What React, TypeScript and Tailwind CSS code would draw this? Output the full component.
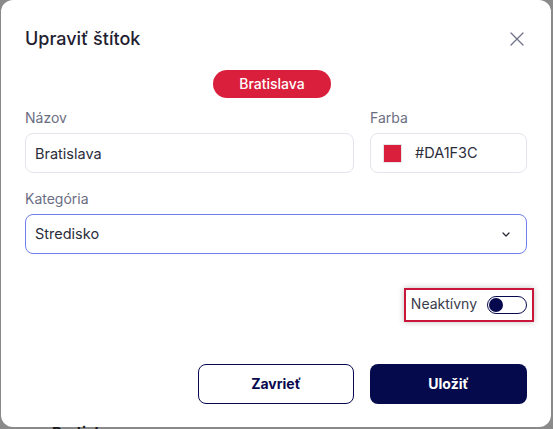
import React, { useState } from "react";

const font = { fontFamily: "Inter, 'Noto Sans', sans-serif" };

const EditTagModal = () => {
  const [name, setName] = useState("Bratislava");
  const [active, setActive] = useState(false);

  return (
    <div className="ml-px w-[550px] h-[427px] rounded-xl bg-white px-6 flex flex-col">
      {/* Header */}
      <div className="flex items-center justify-between pt-[25px]">
        <h2 className="text-[18px] leading-7 font-medium text-[#1f2131]">
          Upraviť štítok
        </h2>
        <button className="mr-[3px] text-[#6f7189]">
          <svg width="14" height="14" viewBox="0 0 14 14" fill="none">
            <path
              d="M1 1L13 13M13 1L1 13"
              stroke="currentColor"
              strokeWidth="1.3"
              strokeLinecap="round"
            />
          </svg>
        </button>
      </div>

      {/* Preview badge */}
      <div className="flex justify-center mt-[17px]">
        <span className="h-7 w-[118px] flex items-center justify-center rounded-full bg-[#DA1F3C] text-white text-sm font-medium -ml-2">
          {name}
        </span>
      </div>

      {/* Name + colour */}
      <div className="flex gap-4 mt-[10px]">
        <div className="flex-1">
          <label className="block text-sm leading-5 text-[#6b6e82] mb-[5px]">
            Názov
          </label>
          <input
            value={name}
            onChange={(e) => setName(e.target.value)}
            className="w-full h-10 rounded-lg border border-[#e4e5ec] px-[9px] text-[14.5px] text-[#2b2d3a] outline-none"
          />
        </div>
        <div className="w-[157px]">
          <label className="block text-sm leading-5 text-[#6b6e82] mb-[5px]">
            Farba
          </label>
          <div className="h-10 rounded-lg border border-[#e4e5ec] flex items-center pl-[12px] gap-[13px]">
            <span className="w-[19px] h-[19px] bg-[#DA1F3C] border border-[#e6e6ea]" />
            <span className="text-[14.5px] text-[#2b2d3a]">#DA1F3C</span>
          </div>
        </div>
      </div>

      {/* Category */}
      <div className="mt-4">
        <label className="block text-sm leading-5 text-[#6b6e82] mb-[5px]">
          Kategória
        </label>
        <div className="h-10 rounded-lg border border-[#6f80ee] flex items-center justify-between pl-[9px] pr-4">
          <span className="text-[14.5px] text-[#2b2d3a]">Stredisko</span>
          <svg width="8" height="5" viewBox="0 0 8 5" fill="none">
            <path
              d="M1 1L4 4L7 1"
              stroke="#2b2d3a"
              strokeWidth="1.3"
              strokeLinecap="round"
              strokeLinejoin="round"
            />
          </svg>
        </div>
      </div>

      {/* Active toggle */}
      <div className="flex justify-end mt-[34px] -mr-[7px]">
        <div className="h-[34px] flex items-center gap-[10px] px-[5px] border-2 border-[#c8173a] shadow-[0_0_6px_rgba(0,0,0,0.25)]">
          <span className="text-sm text-[#3a3c4c] -mt-[3px]">
            {active ? "Aktívny" : "Neaktívny"}
          </span>
          <button
            onClick={() => setActive(!active)}
            className="w-10 h-[18px] rounded-full border-[1.5px] border-[#07094f] flex items-center px-[1px] -mt-[1px]"
          >
            <span className="w-[14px] h-[14px] rounded-full bg-[#07094f]" />
          </button>
        </div>
      </div>

      {/* Actions */}
      <div className="flex justify-end gap-4 mt-[42px]">
        <button className="w-[156px] h-10 rounded-lg border border-[#07094f] text-[#07094f] text-sm font-bold">
          Zavrieť
        </button>
        <button className="w-[157px] h-10 rounded-lg bg-[#050a4d] text-white text-sm font-bold">
          Uložiť
        </button>
      </div>
    </div>
  );
};

export default function App() {
  return (
    <div
      className="w-[553px] h-[429px] overflow-hidden bg-[#8a8a8a]"
      style={font}
    >
      <EditTagModal />
      <div className="pl-[52px] -mt-[2px] text-[15px] leading-none font-bold text-[#1a1a1a]">
        Bratislava
      </div>
    </div>
  );
}
